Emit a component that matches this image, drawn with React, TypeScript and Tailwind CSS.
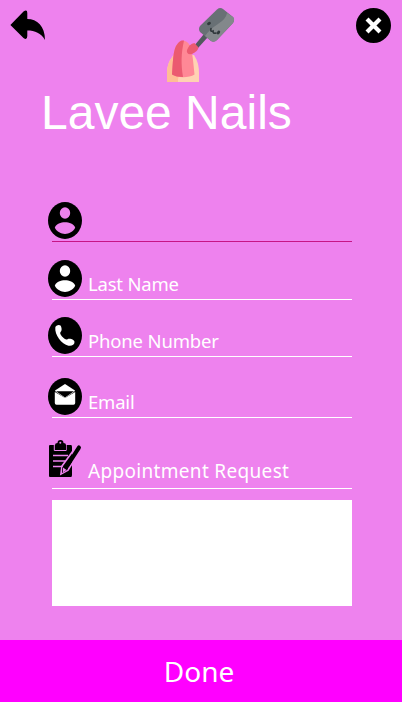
import type { ReactNode } from "react";

function BackIcon() {
  return (
    <svg width="36" height="30" viewBox="0 0 36 30">
      <path d="M0.4 15 L13.5 1.6 Q17.3 -1 17.3 3 V9 C27 9 35 16 35 30 C31 23 25 20.5 17.3 20.5 V26 Q17.3 30.5 13.5 28 Z" fill="#000" />
    </svg>
  );
}

function CloseIcon() {
  return (
    <svg width="35" height="35" viewBox="0 0 35 35">
      <circle cx="17.5" cy="17.5" r="17.5" fill="#000" />
      <path d="M12.5 12.5 L22.5 22.5 M22.5 12.5 L12.5 22.5" stroke="#fff" strokeWidth="4.2" strokeLinecap="square" />
    </svg>
  );
}

function NailLogo() {
  return (
    <svg width="70" height="74" viewBox="0 0 70 74">
      <path d="M0 74 V65 C0 57 3 51 7 47 H27 C31 53 32 59 32 65 V74 Z" fill="#ffd2b3" />
      <path d="M0 74 V65 C0 57 3 51 7 47 L14 66 C11 68 11 71 11 74 Z" fill="#ffbd95" />
      <path d="M5 66.5 C6 54 6 44 9 38 C12 33 15 32 18 33 C24 35 25 43 26 52 L27.5 66.5 C22 70 10 70 5 66.5 Z" fill="#ff8896" />
      <path d="M5 66.5 C6 54 6 44 9 38 C12 33 14 32 17 32.5 C14 46 14 56 16 69 Q9 69 5 66.5 Z" fill="#eb5a70" />
      <path d="M27 38 L37 26 L41 29 L31 40 Z" fill="#52595e" />
      <path d="M27.5 35 L31.5 39.5 Q31 43 25 46 Q19 47 20 42 Q22 36 27.5 35 Z" fill="#eb5a70" />
      <path d="M33 18 L50 1.5 Q53 -1 56 1 L66 9 Q68 11 66 15 L50 32 Q47 35 44 33 L33 24 Q31 21 33 18 Z" fill="#687075" />
      <path d="M67 12 Q67 14 66 15 L50 32 Q47 35 44 33 L38 28 Q43 21 51 16 T60 5 L66 9 Q67.5 10 67 12 Z" fill="#83888b" />
      <path d="M44 20.5 Q43 24 46 23 Q46 26 49 25" fill="none" stroke="#30383b" strokeWidth="1.7" strokeLinecap="round" />
      <ellipse cx="42" cy="15.5" rx="2" ry="1.5" transform="rotate(-30 42 15.5)" fill="#30383b" />
      <ellipse cx="51.5" cy="24.5" rx="1.5" ry="2" transform="rotate(35 51.5 24.5)" fill="#30383b" />
    </svg>
  );
}

function Badge({ children }: { children: ReactNode }) {
  return (
    <svg width="34" height="37" viewBox="0 0 34 37" className="shrink-0">
      <ellipse cx="17" cy="18.5" rx="17" ry="18.5" fill="#000" />
      {children}
    </svg>
  );
}

function Person({ fill }: { fill: string }) {
  return (
    <Badge>
      <g fill={fill}>
        <ellipse cx="17" cy="11" rx="5.2" ry="5.8" />
        <path d="M6.8 25.8 C8 21.5 13 20.2 17 20.2 S26 21.5 27.2 25.8 C25 29.8 21 32 17 32 S9 29.8 6.8 25.8 Z" />
      </g>
    </Badge>
  );
}

function PhoneIcon() {
  return (
    <Badge>
      <path d="M7.3 10.5 C7.5 8.5 11 7 12.5 8.5 C13.5 10 14 12.5 13.3 14 C11.5 15.5 12 17 14 19.5 C16.5 22 18 23 19.5 22.3 C22 20.8 26.5 23 26.5 25 C26.5 28 23.5 29.3 20.5 28.7 C13.5 27 6.5 18 7.3 10.5 Z" fill="#fff" />
    </Badge>
  );
}

function MailIcon() {
  return (
    <Badge>
      <path d="M7 12.5 L17 6 L27 12.5 L26 14 L17 20 L8 14 Z" fill="#fff" />
      <path d="M8 13.2 H26 L17 19.5 Z" fill="#000" />
      <path d="M6.8 14 L17 20 L27.2 14 V25 Q27.2 26.8 25.5 26.8 H8.5 Q6.8 26.8 6.8 25 Z" fill="#fff" />
    </Badge>
  );
}

function ClipboardIcon() {
  return (
    <svg width="34" height="38" viewBox="0 0 34 38" className="mt-px shrink-0">
      <path d="M2 5 H23 Q24 5 24 7 V35 Q24 37 23 37 H2 Q1 37 1 36 V6 Q1 5 2 5 Z" fill="#000" />
      <path d="M6.3 4 V10.5 H18.2 V4" fill="none" stroke="#ee82ee" strokeWidth="1" />
      <path d="M7 10 V5 Q7 3 9.5 3 Q9.5 0 12.5 0 T15.5 3 Q18 3 18 5 V10 Z" fill="#000" />
      <circle cx="12.3" cy="2.7" r="1" fill="#ee82ee" />
      <path d="M5 15.5 H20 M5 21 H17.5 M5 26.5 H15" stroke="#ee82ee" strokeWidth="1.4" />
      <path d="M29 5.5 L14 26 L13 34 L20 30 L33 9" stroke="#ee82ee" strokeWidth="1.7" fill="none" />
      <path d="M18 24 L29.5 6 Q30.5 4.5 32 5.7 Q33.8 7 32.5 9 L20.5 27.5 Z" fill="#000" />
      <path d="M14.5 27 L17 25.5 L20 28.5 L19 30 L14 33 Z" fill="#000" />
      <path d="M15 27.5 L18.5 30 L14.8 32.5 Z" fill="#ee82ee" />
    </svg>
  );
}

type FieldProps = { icon: ReactNode; label: string; row: string; text: string; line?: string };

function Field({ icon, label, row, text, line = "bg-white" }: FieldProps) {
  return (
    <div className={row}>
      <div className="flex h-[39px] items-start">
        {icon}
        <span className={`ml-1.5 whitespace-nowrap leading-6 ${text}`}>{label}</span>
      </div>
      <div className={`ml-1 h-px w-[300px] ${line}`} />
    </div>
  );
}

export default function App() {
  return (
    <main className="flex h-[702px] w-[402px] flex-col overflow-hidden bg-[#ee82ee] font-['Noto_Sans',sans-serif] text-white">
      <header className="flex h-[82px] items-start justify-between pl-2.5 pr-[11px]">
        <button aria-label="Back" className="mt-2.5"><BackIcon /></button>
        <div className="ml-[2px] mt-2"><NailLogo /></div>
        <button aria-label="Close" className="mt-2"><CloseIcon /></button>
      </header>
      <h1 className="ml-[41px] mt-px h-[59px] whitespace-nowrap font-['Liberation_Sans',sans-serif] text-[48px] leading-[60px]">Lavee Nails</h1>
      <form className="ml-12 mt-[60px] h-[438px]">
        <Field icon={<Person fill="#ee82ee" />} label="" row="h-[58px]" text="" line="bg-[#c71585]" />
        <Field icon={<Person fill="#fff" />} label="Last Name" row="h-[57px]" text="mt-3 text-[18.5px] tracking-[-0.2px]" />
        <Field icon={<PhoneIcon />} label="Phone Number" row="h-[61px]" text="mt-3 text-[18.5px] tracking-[-0.16px]" />
        <Field icon={<MailIcon />} label="Email" row="h-[61px]" text="mt-3 text-[18.5px] tracking-[-0.2px]" />
        <div className="h-[61px]">
          <div className="flex h-[49px] items-start">
            <ClipboardIcon />
            <span className="ml-1.5 mt-5 whitespace-nowrap text-[19px] leading-6 tracking-[0.32px]">Appointment Request</span>
          </div>
          <div className="ml-1 h-px w-[300px] bg-white" />
        </div>
        <textarea aria-label="Appointment Request" className="ml-1 block h-[106px] w-[300px] resize-none bg-white" />
      </form>
      <button className="h-[62px] shrink-0 bg-[#ff00ff] pr-1 text-[28px] leading-[62px]">Done</button>
    </main>
  );
}
